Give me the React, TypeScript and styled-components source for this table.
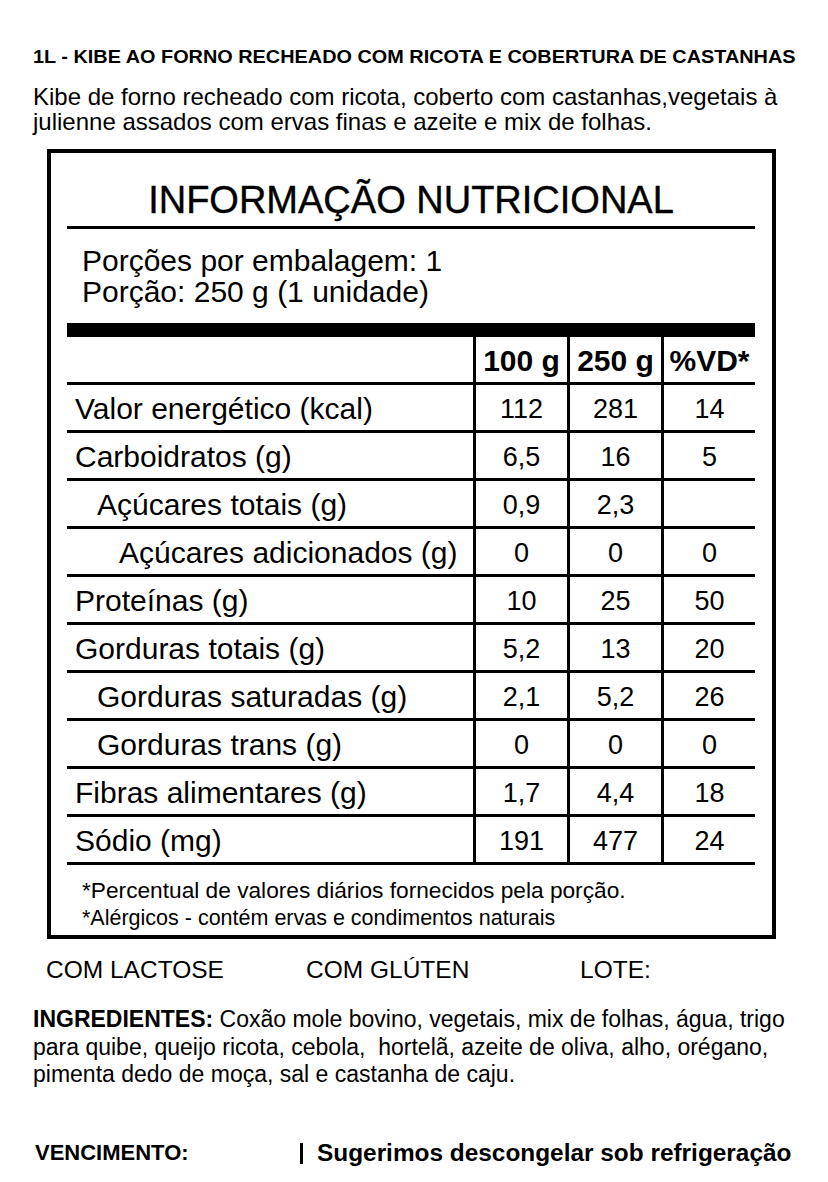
import React from "react";
import styled, { createGlobalStyle } from "styled-components";

const Global = createGlobalStyle`
  html, body { margin: 0; padding: 0; background: #fff; }
  body { font-family: "Liberation Sans", Arial, sans-serif; color: #000; }
`;

const Page = styled.div`
  width: 828px;
  height: 1182px;
  box-sizing: border-box;
  padding: 46px 0 0 0;
  position: relative;
  overflow: hidden;
`;

const Heading = styled.h1`
  margin: 0 0 0 33px;
  display: inline-block;
  font-size: 17.5px;
  line-height: 22px;
  font-weight: 700;
  white-space: nowrap;
  transform: scaleX(1.135);
  transform-origin: left center;
`;

const Desc = styled.p`
  margin: 16px 0 0 33px;
  font-size: 24px;
  line-height: 25px;
  width: 780px;
`;

const Box = styled.section`
  margin: 15px 0 0 47px;
  width: 729px;
  height: 790px;
  box-sizing: border-box;
  border: 4px solid #000;
  padding: 0 17px 0 16px;
  display: flex;
  flex-direction: column;
`;

const Title = styled.h2`
  margin: 0;
  height: 76px;
  display: flex;
  align-items: center;
  justify-content: center;
  font-size: 38px;
  font-weight: 400;
  -webkit-text-stroke: 0.4px #000;
  border-bottom: 3px solid #000;
  padding-top: 22px;
  box-sizing: border-box;
`;

const Serving = styled.div`
  height: 108px;
  box-sizing: border-box;
  padding: 16px 0 0 15px;
  font-size: 30px;
  line-height: 31px;
  border-bottom: 14px solid #000;
`;

const Grid = styled.div`
  display: grid;
  grid-template-columns: 406px 94px 94px 94px;
`;

const Cell = styled.div<{ $indent?: number; $bold?: boolean; $label?: boolean }>`
  height: 48px;
  box-sizing: border-box;
  border-bottom: 3px solid #000;
  border-left: ${(p) => (p.$label ? "none" : "3px solid #000")};
  display: flex;
  align-items: center;
  justify-content: ${(p) => (p.$label ? "flex-start" : "center")};
  padding-left: ${(p) => (p.$label ? 8 + (p.$indent ?? 0) * 22 : 0)}px;
  padding-top: 3px;
  font-size: ${(p) => (p.$bold ? 30 : p.$label ? 30 : 27)}px;
  font-weight: ${(p) => (p.$bold ? 700 : 400)};
  white-space: nowrap;
`;

const Notes = styled.div`
  padding: 12px 0 0 15px;
  display: flex;
  flex-direction: column;
  gap: 2px;
`;

const Note = styled.div<{ $size: number }>`
  font-size: ${(p) => p.$size}px;
  line-height: 26px;
`;

const Flags = styled.div`
  display: grid;
  grid-template-columns: 260px 274px auto;
  margin: 17px 0 0 46px;
  font-size: 24.5px;
  line-height: 28px;
`;

const Ingredients = styled.p`
  margin: 22px 0 0 33px;
  font-size: 23px;
  line-height: 27.5px;
  width: 790px;
`;

const Strong = styled.strong`
  font-weight: 700;
`;

const Footer = styled.div`
  position: absolute;
  left: 0;
  right: 0;
  top: 1139px;
  display: flex;
  align-items: center;
  font-weight: 700;
  line-height: 28px;
`;

const Due = styled.div`
  margin-left: 35px;
  width: 265px;
  font-size: 22px;
`;

const Advice = styled.div`
  display: flex;
  align-items: center;
  gap: 14px;
  font-size: 24.4px;
`;

const Bar = styled.span`
  display: inline-block;
  width: 3px;
  height: 21px;
  background: #000;
`;

type Row = { label: string; indent: number; v: [string, string, string] };

const rows: Row[] = [
  { label: "Valor energético (kcal)", indent: 0, v: ["112", "281", "14"] },
  { label: "Carboidratos (g)", indent: 0, v: ["6,5", "16", "5"] },
  { label: "Açúcares totais (g)", indent: 1, v: ["0,9", "2,3", ""] },
  { label: "Açúcares adicionados (g)", indent: 2, v: ["0", "0", "0"] },
  { label: "Proteínas (g)", indent: 0, v: ["10", "25", "50"] },
  { label: "Gorduras totais (g)", indent: 0, v: ["5,2", "13", "20"] },
  { label: "Gorduras saturadas (g)", indent: 1, v: ["2,1", "5,2", "26"] },
  { label: "Gorduras trans (g)", indent: 1, v: ["0", "0", "0"] },
  { label: "Fibras alimentares (g)", indent: 0, v: ["1,7", "4,4", "18"] },
  { label: "Sódio (mg)", indent: 0, v: ["191", "477", "24"] },
];

export default function App() {
  return (
    <Page>
      <Global />
      <Heading>1L - KIBE AO FORNO RECHEADO COM RICOTA E COBERTURA DE CASTANHAS</Heading>
      <Desc>
        Kibe de forno recheado com ricota, coberto com castanhas,vegetais à
        <br />
        julienne assados com ervas finas e azeite e mix de folhas.
      </Desc>
      <Box>
        <Title>INFORMAÇÃO NUTRICIONAL</Title>
        <Serving>
          Porções por embalagem: 1
          <br />
          Porção: 250 g (1 unidade)
        </Serving>
        <Grid>
          <Cell $label />
          <Cell $bold>100 g</Cell>
          <Cell $bold>250 g</Cell>
          <Cell $bold>%VD*</Cell>
          {rows.map((r) => (
            <React.Fragment key={r.label}>
              <Cell $label $indent={r.indent}>
                {r.label}
              </Cell>
              {r.v.map((x, i) => (
                <Cell key={i}>{x}</Cell>
              ))}
            </React.Fragment>
          ))}
        </Grid>
        <Notes>
          <Note $size={22.7}>*Percentual de valores diários fornecidos pela porção.</Note>
          <Note $size={21.5}>*Alérgicos - contém ervas e condimentos naturais</Note>
        </Notes>
      </Box>
      <Flags>
        <span>COM LACTOSE</span>
        <span>COM GLÚTEN</span>
        <span>LOTE:</span>
      </Flags>
      <Ingredients>
        <Strong>INGREDIENTES:</Strong> Coxão mole bovino, vegetais, mix de folhas, água, trigo
        <br />
        para quibe, queijo ricota, cebola,&nbsp; hortelã, azeite de oliva, alho, orégano,
        <br />
        pimenta dedo de moça, sal e castanha de caju.
      </Ingredients>
      <Footer>
        <Due>VENCIMENTO:</Due>
        <Advice>
          <Bar />
          <span>Sugerimos descongelar sob refrigeração</span>
        </Advice>
      </Footer>
    </Page>
  );
}
